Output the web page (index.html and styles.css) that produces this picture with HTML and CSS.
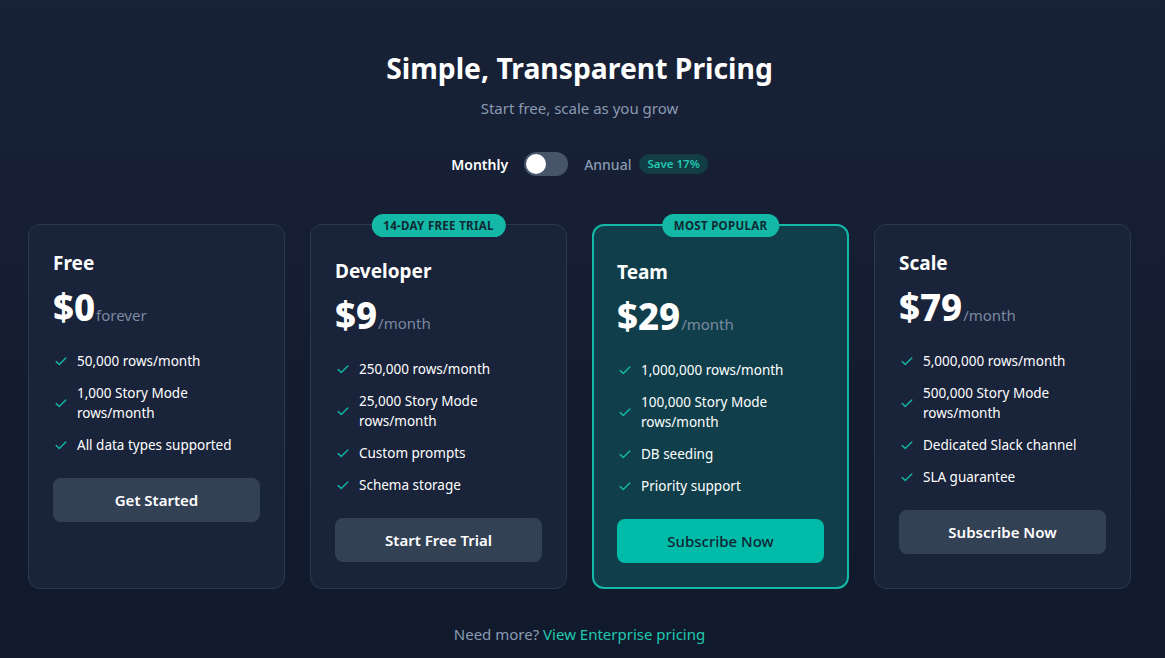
FILE: index.html
```html
<!DOCTYPE html>
<html lang="en">
<head>
<meta charset="utf-8">
<title>Pricing</title>
<link rel="stylesheet" href="styles.css">
</head>
<body>
<main class="page">
  <header class="hero">
    <h1 class="hero-title">Simple, Transparent Pricing</h1>
    <p class="hero-sub">Start free, scale as you grow</p>
    <div class="billing">
      <span class="billing-label active">Monthly</span>
      <span class="switch"><span class="knob"></span></span>
      <span class="billing-label">Annual</span>
      <span class="save">Save 17%</span>
    </div>
  </header>

  <section class="plans">
    <article class="plan">
      <h2 class="plan-name">Free</h2>
      <div class="price"><span class="amount">$0</span><span class="period">forever</span></div>
      <ul class="features">
        <li><svg class="check" viewBox="0 0 16 16"><path d="M2.5 8.5l3.5 3.5 7.5-7.5"/></svg><span>50,000 rows/month</span></li>
        <li><svg class="check" viewBox="0 0 16 16"><path d="M2.5 8.5l3.5 3.5 7.5-7.5"/></svg><span>1,000 Story Mode rows/month</span></li>
        <li><svg class="check" viewBox="0 0 16 16"><path d="M2.5 8.5l3.5 3.5 7.5-7.5"/></svg><span>All data types supported</span></li>
      </ul>
      <button class="btn">Get Started</button>
    </article>

    <article class="plan badged">
      <span class="badge">14-DAY FREE TRIAL</span>
      <h2 class="plan-name">Developer</h2>
      <div class="price"><span class="amount">$9</span><span class="period">/month</span></div>
      <ul class="features">
        <li><svg class="check" viewBox="0 0 16 16"><path d="M2.5 8.5l3.5 3.5 7.5-7.5"/></svg><span>250,000 rows/month</span></li>
        <li><svg class="check" viewBox="0 0 16 16"><path d="M2.5 8.5l3.5 3.5 7.5-7.5"/></svg><span>25,000 Story Mode rows/month</span></li>
        <li><svg class="check" viewBox="0 0 16 16"><path d="M2.5 8.5l3.5 3.5 7.5-7.5"/></svg><span>Custom prompts</span></li>
        <li><svg class="check" viewBox="0 0 16 16"><path d="M2.5 8.5l3.5 3.5 7.5-7.5"/></svg><span>Schema storage</span></li>
      </ul>
      <button class="btn">Start Free Trial</button>
    </article>

    <article class="plan badged popular">
      <span class="badge">MOST POPULAR</span>
      <h2 class="plan-name">Team</h2>
      <div class="price"><span class="amount">$29</span><span class="period">/month</span></div>
      <ul class="features">
        <li><svg class="check" viewBox="0 0 16 16"><path d="M2.5 8.5l3.5 3.5 7.5-7.5"/></svg><span>1,000,000 rows/month</span></li>
        <li><svg class="check" viewBox="0 0 16 16"><path d="M2.5 8.5l3.5 3.5 7.5-7.5"/></svg><span>100,000 Story Mode rows/month</span></li>
        <li><svg class="check" viewBox="0 0 16 16"><path d="M2.5 8.5l3.5 3.5 7.5-7.5"/></svg><span>DB seeding</span></li>
        <li><svg class="check" viewBox="0 0 16 16"><path d="M2.5 8.5l3.5 3.5 7.5-7.5"/></svg><span>Priority support</span></li>
      </ul>
      <button class="btn btn-primary">Subscribe Now</button>
    </article>

    <article class="plan">
      <h2 class="plan-name">Scale</h2>
      <div class="price"><span class="amount">$79</span><span class="period">/month</span></div>
      <ul class="features">
        <li><svg class="check" viewBox="0 0 16 16"><path d="M2.5 8.5l3.5 3.5 7.5-7.5"/></svg><span>5,000,000 rows/month</span></li>
        <li><svg class="check" viewBox="0 0 16 16"><path d="M2.5 8.5l3.5 3.5 7.5-7.5"/></svg><span>500,000 Story Mode rows/month</span></li>
        <li><svg class="check" viewBox="0 0 16 16"><path d="M2.5 8.5l3.5 3.5 7.5-7.5"/></svg><span>Dedicated Slack channel</span></li>
        <li><svg class="check" viewBox="0 0 16 16"><path d="M2.5 8.5l3.5 3.5 7.5-7.5"/></svg><span>SLA guarantee</span></li>
      </ul>
      <button class="btn">Subscribe Now</button>
    </article>
  </section>

  <p class="more">Need more? <a class="more-link" href="#">View Enterprise pricing</a></p>
</main>
</body>
</html>
```

FILE: styles.css
```css
* { box-sizing: border-box; }
html, body { margin: 0; padding: 0; height: 100%; }
body {
  font-family: "Noto Sans", "Open Sans", sans-serif;
  background: linear-gradient(180deg, #182237 0%, #141c30 55%, #111a2d 100%);
  color: #ffffff;
  overflow: hidden;
}
.page {
  width: 1165px;
  height: 658px;
  padding: 48px 34px 0 28px;
}
.hero { text-align: center; }
.hero-title {
  margin: 0;
  font-size: 28.3px;
  line-height: 40px;
  font-weight: 700;
  color: #ffffff;
}
.hero-sub {
  margin: 8px 0 0 0;
  font-size: 15px;
  line-height: 24px;
  color: #8a9ab2;
}
.billing {
  margin-top: 32px;
  display: flex;
  justify-content: center;
  align-items: center;
  gap: 16px;
  height: 24px;
}
.billing-label {
  font-size: 14px;
  font-weight: 500;
  color: #8a9ab2;
}
.billing-label.active { color: #ffffff; font-weight: 600; }
.switch {
  position: relative;
  width: 44px;
  height: 24px;
  border-radius: 12px;
  background: #475569;
}
.knob {
  position: absolute;
  left: 2px;
  top: 2px;
  width: 20px;
  height: 20px;
  border-radius: 50%;
  background: #ffffff;
}
.save {
  margin-left: -8px;
  padding: 2px 8px;
  border-radius: 999px;
  background: #123d45;
  color: #22c9b0;
  font-size: 11.5px;
  line-height: 16px;
  font-weight: 600;
}
.plans {
  margin-top: 48px;
  display: grid;
  grid-template-columns: repeat(4, 257px);
  column-gap: 25px;
  align-items: stretch;
}
.plan {
  position: relative;
  background: #19233a;
  border: 1px solid #2d384c;
  border-radius: 12px;
  padding: 24px;
  display: flex;
  flex-direction: column;
  align-items: stretch;
}
.plan.badged { padding-top: 32px; }
.plan.popular {
  background: #103f4b;
  border: 2px solid #14b8a6;
  padding-left: 23px;
  padding-right: 23px;
}
.badge {
  position: absolute;
  top: -11px;
  left: 50%;
  transform: translateX(-50%);
  background: #13b8a6;
  color: #0f2a33;
  font-size: 11.5px;
  line-height: 23px;
  font-weight: 700;
  letter-spacing: 0.3px;
  padding: 0 12px;
  border-radius: 999px;
  white-space: nowrap;
}
.popular .badge { top: -12px; }
.plan-name {
  margin: 0;
  font-size: 19px;
  line-height: 28px;
  font-weight: 700;
}
.price {
  margin-top: 10px;
  display: flex;
  align-items: baseline;
  height: 40px;
}
.amount {
  font-size: 36.5px;
  line-height: 40px;
  font-weight: 800;
}
.period {
  font-size: 15px;
  color: #7c8aa1;
  margin-left: 1px;
}
.features {
  list-style: none;
  margin: 24px 0 0 0;
  padding: 0;
  display: flex;
  flex-direction: column;
  gap: 12px;
}
.features li {
  display: flex;
  align-items: center;
  gap: 9px;
  font-size: 13.5px;
  line-height: 20px;
  color: #ffffff;
}
.check {
  flex: 0 0 14px;
  width: 14px;
  height: 14px;
  margin-left: 1px;
}
.check path {
  fill: none;
  stroke: #14b8a6;
  stroke-width: 1.6;
  stroke-linecap: round;
  stroke-linejoin: round;
}
.btn {
  margin-top: 23px;
  height: 44px;
  border: none;
  border-radius: 8px;
  background: #334155;
  color: #ffffff;
  font-family: inherit;
  font-size: 15px;
  font-weight: 600;
}
.btn-primary {
  background: #00bba7;
  color: #0f2535;
  font-weight: 500;
}
.more {
  margin: 33px 0 0 0;
  text-align: center;
  font-size: 15px;
  line-height: 24px;
  color: #8a9ab2;
}
.more-link {
  color: #1fc9ae;
  text-decoration: none;
}
```
